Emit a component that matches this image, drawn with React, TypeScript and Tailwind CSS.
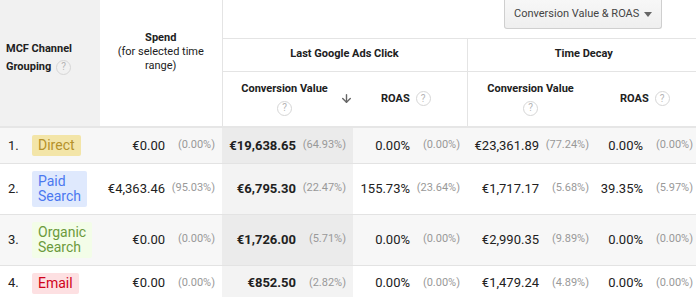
import { ArrowDown } from "lucide-react";

type Row = {
  n: number;
  label: string[];
  badge: string;
  spend: [string, string];
  lgConv: [string, string];
  lgRoas: [string, string];
  tdConv: [string, string];
  tdRoas: [string, string];
};

const rows: Row[] = [
  {
    n: 1,
    label: ["Direct"],
    badge: "bg-[#f3e5a8] text-[#b5922a]",
    spend: ["€0.00", "(0.00%)"],
    lgConv: ["€19,638.65", "(64.93%)"],
    lgRoas: ["0.00%", "(0.00%)"],
    tdConv: ["€23,361.89", "(77.24%)"],
    tdRoas: ["0.00%", "(0.00%)"],
  },
  {
    n: 2,
    label: ["Paid", "Search"],
    badge: "bg-[#dfe9fd] text-[#4b78f0]",
    spend: ["€4,363.46", "(95.03%)"],
    lgConv: ["€6,795.30", "(22.47%)"],
    lgRoas: ["155.73%", "(23.64%)"],
    tdConv: ["€1,717.17", "(5.68%)"],
    tdRoas: ["39.35%", "(5.97%)"],
  },
  {
    n: 3,
    label: ["Organic", "Search"],
    badge: "bg-[#f3fde8] text-[#6b9a3c]",
    spend: ["€0.00", "(0.00%)"],
    lgConv: ["€1,726.00", "(5.71%)"],
    lgRoas: ["0.00%", "(0.00%)"],
    tdConv: ["€2,990.35", "(9.89%)"],
    tdRoas: ["0.00%", "(0.00%)"],
  },
  {
    n: 4,
    label: ["Email"],
    badge: "bg-[#fde0e2] text-[#d0021b]",
    spend: ["€0.00", "(0.00%)"],
    lgConv: ["€852.50", "(2.82%)"],
    lgRoas: ["0.00%", "(0.00%)"],
    tdConv: ["€1,479.24", "(4.89%)"],
    tdRoas: ["0.00%", "(0.00%)"],
  },
];

function Help() {
  return (
    <span className="inline-flex w-[15px] h-[15px] rounded-full border border-[#d6d6d6] items-center justify-center text-[10px] leading-none text-[#b5b5b5] font-normal align-middle">
      ?
    </span>
  );
}

// value + share, share sits in a fixed box so columns line up
function Val({ v, bold }: { v: [string, string]; bold?: boolean }) {
  return (
    <div className="flex justify-end items-center pr-[7px]">
      <span className={bold ? "font-bold text-[13px] text-[#212121]" : "text-[13px] text-[#212121]"}>{v[0]}</span>
      <span className="w-[50px] text-right text-[11px] text-[#999]">{v[1]}</span>
    </div>
  );
}

export default function App() {
  return (
    <div className="w-[696px] h-[297px] overflow-hidden bg-white" style={{ fontFamily: "Roboto, 'Liberation Sans', sans-serif" }}>
      <table className="border-collapse table-fixed w-[700px] text-[#212121]">
        <colgroup>
          <col className="w-[100px]" />
          <col className="w-[122px]" />
          <col className="w-[131px]" />
          <col className="w-[114px]" />
          <col className="w-[129px]" />
          <col className="w-[104px]" />
        </colgroup>
        <thead>
          <tr className="h-[38px]">
            <th rowSpan={3} className="bg-[#f1f1f1] border-b-2 border-[#e6e6e6] text-left align-top pt-[40px] pl-[6px] text-[11px] font-bold leading-[18px]">
              MCF Channel
              <br />
              Grouping <span className="ml-[2px]"><Help /></span>
            </th>
            <th rowSpan={3} className="border-b-2 border-[#e6e6e6] align-top pt-[31px] text-center text-[11px] leading-[14px]">
              <div className="font-bold">Spend</div>
              <div className="font-normal">(for selected time<br />range)</div>
            </th>
            <th colSpan={4} className="border-l border-b border-[#e4e4e4] align-top p-0">
              <div className="flex justify-end pr-[38px]">
                <div className="flex items-center h-[29px] w-[158px] pl-[9px] pr-[9px] border border-t-0 border-[#cfcfcf] rounded-b-[3px] bg-gradient-to-b from-[#f7f7f7] to-[#efefef] text-[11px] font-normal text-[#444] whitespace-nowrap">
                  <span className="flex-1 text-left">Conversion Value &amp; ROAS</span>
                  <span className="w-0 h-0 border-x-[4px] border-x-transparent border-t-[5px] border-t-[#666]" />
                </div>
              </div>
            </th>
          </tr>
          <tr className="h-[33px]">
            <th colSpan={2} className="border-l border-b border-[#e4e4e4] text-[11px] font-bold text-center">
              Last Google Ads Click
            </th>
            <th colSpan={2} className="border-l border-b border-[#e4e4e4] text-[11px] font-bold text-center">
              Time Decay
            </th>
          </tr>
          <tr className="h-[56px]">
            <th className="border-l border-b-2 border-[#e4e4e4] border-b-[#e6e6e6] text-[11px] font-bold p-0">
              <div className="flex items-center">
                <div className="flex flex-col items-center w-[108px] ml-[8px] leading-[16px]">
                  <span>Conversion Value</span>
                  <span className="mt-[3px]"><Help /></span>
                </div>
                <ArrowDown size={13} strokeWidth={2.6} className="text-[#666] ml-[1px]" />
              </div>
            </th>
            <th className="border-b-2 border-[#e6e6e6] text-[11px] font-bold p-0">
              <div className="flex items-center pl-[28px] gap-[6px]">
                ROAS <Help />
              </div>
            </th>
            <th className="border-l border-b-2 border-[#e4e4e4] border-b-[#e6e6e6] text-[11px] font-bold p-0">
              <div className="flex flex-col items-center w-[106px] ml-[10px] leading-[16px]">
                <span>Conversion Value</span>
                <span className="mt-[3px]"><Help /></span>
              </div>
            </th>
            <th className="border-b-2 border-[#e6e6e6] text-[11px] font-bold p-0">
              <div className="flex items-center pl-[24px] gap-[6px]">
                ROAS <Help />
              </div>
            </th>
          </tr>
        </thead>
        <tbody>
          {rows.map((r, i) => {
            const odd = i % 2 === 0;
            const h = r.label.length > 1 ? "h-[51px]" : "h-[36px]";
            return (
              <tr key={r.n} className={`${h} border-b border-[#e3e3e3] ${odd ? "bg-[#f7f7f7]" : "bg-white"}`}>
                <td className="p-0">
                  <div className="flex items-center">
                    <span className="w-[32px] pl-[8px] text-[13px]">{r.n}.</span>
                    <span className={`px-[6px] py-[3px] rounded-[2px] text-[14px] leading-[15px] ${r.badge}`}>
                      {r.label.map((l) => (
                        <div key={l}>{l}</div>
                      ))}
                    </span>
                  </div>
                </td>
                <td className="p-0">
                  <Val v={r.spend} />
                </td>
                <td className={`p-0 ${odd ? "bg-[#ebebeb]" : "bg-[#f3f3f3]"}`}>
                  <Val v={r.lgConv} bold />
                </td>
                <td className="p-0">
                  <Val v={r.lgRoas} />
                </td>
                <td className="p-0">
                  <Val v={r.tdConv} />
                </td>
                <td className="p-0">
                  <Val v={r.tdRoas} />
                </td>
              </tr>
            );
          })}
        </tbody>
      </table>
    </div>
  );
}
